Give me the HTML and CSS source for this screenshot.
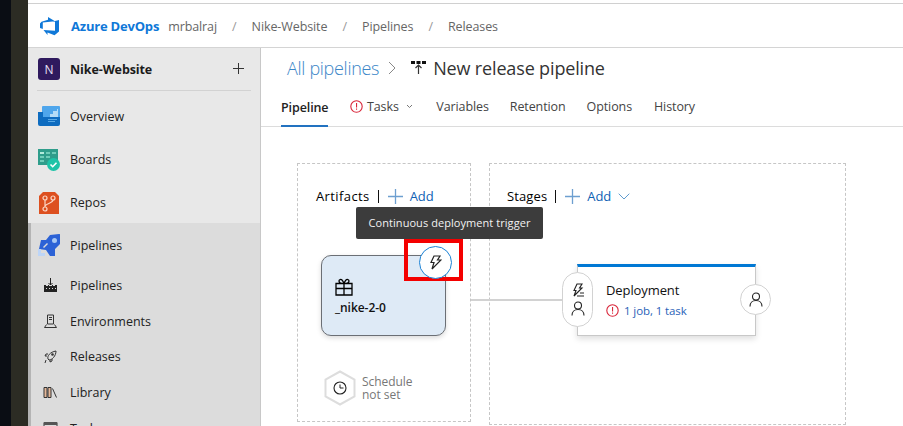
FILE: index.html
```html
<!DOCTYPE html>
<html lang="en">
<head>
<meta charset="utf-8">
<title>New release pipeline</title>
<link rel="stylesheet" href="styles.css">
</head>
<body>
<div class="strip-dark"></div>
<div class="strip-olive"></div>
<div class="app">
  <header class="topbar">
    <svg class="logo" width="20" height="20" viewBox="0 0 20 20"><path fill="#0f78d8" d="M19 4v11.400l-4.500 3.800-7-2.600v2.500l-4-5.200 11.500.9V5L19 4zM15 5.300L8 1v2.800L1.500 5.700 0 7.600v4.300l2.800 1.200V6.400L15 5.300z"/></svg>
    <b class="brand">Azure DevOps</b>
    <span class="crumb crumb-org">mrbalraj</span><span class="slash">/</span>
    <span class="crumb">Nike-Website</span><span class="slash">/</span>
    <span class="crumb">Pipelines</span><span class="slash">/</span>
    <span class="crumb">Releases</span>
  </header>
  <div class="body">
    <nav class="sidebar">
      <div class="project">
        <span class="avatar">N</span><b class="project-name">Nike-Website</b>
        <svg class="plus" width="11" height="11" viewBox="0 0 11 11"><path fill="none" stroke="#333" d="M5.500 0v11M0 5.500h11"/></svg>
      </div>
      <div class="nav-top">
        <a class="nav-item">
          <svg class="nav-icon" width="22" height="21" viewBox="0 0 22 21"><path fill="#4fa6ec" d="M4 1a1 1 0 0 1 1-1h16a1 1 0 0 1 1 1v17H4z"/><path fill="#b5dcf7" d="M8 11h4V8h3V5h4V3h1v9H8z"/><path fill="#0e6cc0" d="M0 6h5v5h17v7a2 2 0 0 1-2 2H2a2 2 0 0 1-2-2z"/><path fill="#5aaae6" d="M10 13h9v1h-9zM10 15h7v1h-7z"/></svg>
          <span>Overview</span></a>
        <a class="nav-item">
          <svg class="nav-icon" width="22" height="22" viewBox="0 0 22 22"><path fill="#2f9d8b" d="M0 0h20v16H0z"/><path fill="#b4ebdc" d="M2 3h4v2H2z"/><path fill="#6fcdb9" d="M8 3h4v2H8zM14 3h4v2h-4zM8 7h4v2H8zM2 7h4v2H2zM2 11h4v2H2z"/><circle cx="15.500" cy="15.500" r="6.500" fill="#1ec3a7"/><path fill="none" stroke="#fff" stroke-width="1.600" d="M12.500 15.500l2.200 2.200 3.800-4"/></svg>
          <span>Boards</span></a>
        <a class="nav-item">
          <svg class="nav-icon" width="22" height="23" viewBox="0 0 22 23"><path fill="#dd5020" d="M5 1h12l4 4v18H1V5z"/><g fill="none" stroke="#fbd6c6" stroke-width="1.200"><circle cx="7" cy="7" r="2"/><circle cx="15" cy="7" r="2"/><circle cx="7" cy="18" r="2"/><path d="M7 9v7M15 9c0 3-6 3-8 6"/></g></svg>
          <span>Repos</span></a>
      </div>
      <div class="nav-section">
        <a class="nav-item nav-head">
          <svg class="nav-icon" width="22" height="22" viewBox="0 0 22 22"><path fill="#2c62d6" d="M8 6l4-5 9-1c1 0 1 0 1 1v9l-5 5v7h-5l-4-6-7-1 2-9z"/><circle cx="16.500" cy="6.500" r="2.500" fill="#a8c8f4"/><path fill="#bdd5f7" d="M0 15h3v4h4v3H0z"/><path fill="#dcdcdc" d="M5 13l4-4 1 1-4 4z"/></svg>
          <span>Pipelines</span></a>
        <a class="nav-sub">
          <svg class="sub-icon" width="15" height="15" viewBox="0 0 15 15"><path fill="none" stroke="#222" d="M7.500 0v7M5.500 5l2 2 2-2"/><path fill="#222" d="M1 7h2v1h2V7h1v1h3V7h1v1h2V7h2v7H1z"/><path fill="#ddd" d="M3 10h1v1H3zM6 10h1v1H6zM9 10h1v1H9zM12 10h1v1h-1z"/></svg>
          <span>Pipelines</span></a>
        <a class="nav-sub">
          <svg class="sub-icon" width="15" height="15" viewBox="0 0 15 15"><path fill="none" stroke="#333" d="M4.500 1h6v9h-6zM6 3.500h3M6 5.500h3M3.500 10.500l-2 3h12l-2-3"/></svg>
          <span>Environments</span></a>
        <a class="nav-sub">
          <svg class="sub-icon" width="15" height="15" viewBox="0 0 15 15"><path fill="none" stroke="#333" d="M5 10c-1-3 2-7 8-8 0 5-4 9-7 9zM5 5H3L2 7h2M9 10v2l-2 1v-2M3 11l-1 3"/><circle cx="9.500" cy="5.500" r="1.300" fill="#333"/></svg>
          <span>Releases</span></a>
        <a class="nav-sub">
          <svg class="sub-icon" width="15" height="15" viewBox="0 0 15 15"><path fill="#e5b89a" stroke="#333" d="M1 2.500h3v10H1zM5 2.500h3v10H5z"/><path fill="none" stroke="#333" d="M9.500 3.500l4 9"/></svg>
          <span>Library</span></a>
        <a class="nav-sub">
          <svg class="sub-icon" width="15" height="15" viewBox="0 0 15 15"><path fill="none" stroke="#333" d="M1 1.500h13v11H1z"/><path fill="#555" d="M1 1h13v3H1z"/></svg>
          <span>Task groups</span></a>
      </div>
    </nav>
    <main class="main">
      <div class="titlebar">
        <a class="all-link">All pipelines</a>
        <svg class="chev" width="9" height="14" viewBox="0 0 9 14"><path fill="none" stroke="#888" d="M1 1l6 6-6 6"/></svg>
        <svg class="title-icon" width="15" height="15" viewBox="0 0 15 15"><path fill="#111" d="M0 1h4v3H0zM5.500 1h4v3h-4zM11 1h4v3h-4z"/><path fill="none" stroke="#333" stroke-width="1.200" d="M7.500 14V5M4.500 8l3-3 3 3"/></svg>
        <span class="title">New release pipeline</span>
      </div>
      <div class="tabs">
        <a class="tab tab-active">Pipeline</a>
        <a class="tab tab-tasks">
          <svg class="warn" width="13" height="13" viewBox="0 0 13 13"><circle cx="6.500" cy="6.500" r="5.700" fill="none" stroke="#d9263a" stroke-width="1.100"/><path fill="#d9263a" d="M6 3h1.100v4.500H6zM6 8.600h1.100v1.200H6z"/></svg>
          Tasks
          <svg class="caret" width="7" height="5" viewBox="0 0 7 5"><path fill="none" stroke="#777" d="M1 1l2.500 2.500L6 1"/></svg>
        </a>
        <a class="tab">Variables</a>
        <a class="tab">Retention</a>
        <a class="tab tab-options">Options</a>
        <a class="tab">History</a>
      </div>
      <div class="canvas">
        <section class="zone zone-artifacts">
          <div class="zone-head"><span class="zone-label">Artifacts</span><i class="bar"></i>
            <svg class="add-plus" width="15" height="15" viewBox="0 0 15 15"><path fill="none" stroke="#6d9fd0" stroke-width="1.300" d="M7.500 0v15M0 7.500h15"/></svg>
            <a class="add">Add</a></div>
        </section>
        <section class="zone zone-stages">
          <div class="zone-head"><span class="zone-label">Stages</span><i class="bar"></i>
            <svg class="add-plus" width="15" height="15" viewBox="0 0 15 15"><path fill="none" stroke="#6d9fd0" stroke-width="1.300" d="M7.500 0v15M0 7.500h15"/></svg>
            <a class="add">Add</a>
            <svg class="add-caret" width="12" height="7" viewBox="0 0 12 7"><path fill="none" stroke="#5f9bcf" d="M.7.700L6 6 11.300.700"/></svg></div>
        </section>
        <div class="connector"></div>
        <div class="artifact">
          <svg class="gift" width="18" height="18" viewBox="0 0 18 18"><path fill="none" stroke="#000" stroke-width="1.300" d="M1 5.500h16v11.500H1zM1 10.500h16M9 5.500V17M9 5.500C6 5.500 4 4.500 4 3s2-2 3-1 2 3.500 2 3.500 1-2.500 2-3.500 3-.5 3 1-2 2.500-5 2.500"/></svg>
          <div class="artifact-name">_nike-2-0</div>
        </div>
        <div class="highlight"></div>
        <div class="trigger">
          <svg width="13" height="15" viewBox="0 0 13 15"><path fill="none" stroke="#222" stroke-width="1.200" d="M5 1h6L8.500 5H12L3 14l2-6.500H2z"/></svg>
        </div>
        <div class="tooltip">Continuous deployment trigger</div>
        <div class="schedule">
          <svg class="hex" width="34" height="36" viewBox="0 0 34 36"><path fill="#fff" stroke="#ddd" stroke-width="2" d="M17 1.500l14.500 8v17l-14.500 8-14.500-8v-17z"/><circle cx="17" cy="18" r="6" fill="none" stroke="#222" stroke-width="1.100"/><path fill="none" stroke="#222" d="M17 14.500V18h3.500"/></svg>
          <span class="schedule-text">Schedule<br>not set</span>
        </div>
        <div class="stage">
          <div class="stage-name">Deployment</div>
          <div class="stage-meta">
            <svg width="13" height="13" viewBox="0 0 13 13"><circle cx="6.500" cy="6.500" r="5.700" fill="none" stroke="#d9263a" stroke-width="1.100"/><path fill="#d9263a" d="M6 3h1.100v4.500H6zM6 8.600h1.100v1.200H6z"/></svg>
            <a>1 job, 1 task</a>
          </div>
        </div>
        <div class="pill">
          <svg width="14" height="15" viewBox="0 0 14 15"><path fill="none" stroke="#222" stroke-width="1.100" d="M6 1h5L8.500 5H11l-8 8 2-5.500H3zM6 13h7M9 10h4"/></svg>
          <svg width="14" height="15" viewBox="0 0 14 15"><circle cx="7" cy="4.500" r="3.500" fill="none" stroke="#222" stroke-width="1.100"/><path fill="none" stroke="#222" stroke-width="1.100" d="M1 14.500c0-3.500 2.500-6 6-6s6 2.500 6 6"/></svg>
        </div>
        <div class="post">
          <svg width="14" height="15" viewBox="0 0 14 15"><circle cx="7" cy="4.500" r="3.500" fill="none" stroke="#222" stroke-width="1.100"/><path fill="none" stroke="#222" stroke-width="1.100" d="M1 14.500c0-3.500 2.500-6 6-6s6 2.500 6 6"/></svg>
        </div>
      </div>
    </main>
  </div>
</div>
</body>
</html>
```
FILE: styles.css
```css
* { box-sizing: border-box; }
html, body { height: 100%; }
body {
  margin: 0;
  display: flex;
  height: 426px;
  overflow: hidden;
  background: #fff;
  font-family: "Open Sans", "Noto Sans", sans-serif;
  color: #222;
}
a { color: inherit; text-decoration: none; }
.strip-dark { width: 11px; background: #0a0d14; }
.strip-olive { width: 17px; background: #2c2c24; }
.app { flex: 1; display: flex; flex-direction: column; min-width: 0; }

.topbar {
  height: 48px;
  flex: none;
  display: flex;
  align-items: center;
  padding: 5px 0 0 12px;
  box-shadow: inset 0 3px 0 #fff, inset 0 4px 0 #d0d0d0;
  border-bottom: 1px solid #d4d4d4;
  font-size: 12.500px;
  color: #666;
}
.logo { margin-right: 11px; }
.brand { color: #0f78d8; font-size: 13px; font-weight: 700; margin-right: 9px; letter-spacing: -.2px; }
.crumb { letter-spacing: -.1px; }
.slash { margin: 0 15px; color: #999; }

.body { flex: 1; display: flex; min-height: 0; }
.sidebar {
  width: 233px;
  flex: none;
  display: flex;
  flex-direction: column;
  background: #e8e8e8;
  border-right: 1px solid #c8c8c8;
  font-size: 12.500px;
  color: #222;
}
.project {
  margin: 0 9px;
  height: 43px;
  flex: none;
  display: flex;
  align-items: center;
  border-bottom: 1px solid #d2d2d2;
}
.avatar {
  width: 22px; height: 22px;
  margin-left: 1px;
  background: #2f1a5e;
  color: #e8e0f4;
  border-radius: 3px;
  font-size: 12px;
  display: flex; align-items: center; justify-content: center;
}
.project-name { margin-left: 10px; flex: 1; font-size: 12.500px; font-weight: 700; color: #1b1b1b; letter-spacing: -.1px; }
.plus { margin-right: 7px; margin-bottom: 2px; }
.nav-top { display: flex; flex-direction: column; flex: none; height: 132px; padding-top: 4px; }
.nav-item { height: 43px; flex: none; display: flex; align-items: center; padding-left: 9px; }
.nav-icon { margin: 0 10px 0 1px; flex: none; }
.nav-section {
  flex: 1;
  min-height: 0;
  overflow: hidden;
  background: #dcdcdc;
  border-left: 3px solid #b4b4b4;
}
.nav-head { padding-left: 6px; height: 44.500px; font-weight: 500; }
.nav-sub { display: flex; align-items: center; height: 35.700px; padding-left: 12px; }
.sub-icon { margin-right: 12px; flex: none; }

.main { flex: 1; display: flex; flex-direction: column; min-width: 0; }
.titlebar { height: 39px; flex: none; display: flex; align-items: center; padding-left: 26px; }
.all-link { color: #3b86c8; font-size: 18px; font-weight: 300; letter-spacing: -.3px; }
.chev { margin: 0 14px 0 9px; }
.title-icon { margin-right: 7px; }
.title { font-size: 18px; color: #333; letter-spacing: -.15px; }
.tabs {
  height: 40px;
  flex: none;
  display: flex;
  align-items: stretch;
  padding-left: 20px;
  border-bottom: 1px solid #dcdcdc;
  font-size: 12.500px;
  color: #444;
}
.tab { display: flex; align-items: center; margin-right: 21px; letter-spacing: -.1px; }
.tab-active { color: #222; font-weight: 600; box-shadow: inset 0 -2px 0 #2272c0; margin-bottom: -1px; margin-right: 22px; }
.tab-tasks { gap: 3.500px; margin-right: 23px; }
.tab-options { margin-right: 22px; }
.caret { margin-left: 4px; }

.canvas { flex: 1; position: relative; overflow: hidden; }
.zone { position: absolute; top: 36px; border: 1px dashed #c6c6c6; padding-top: 23px; }
.zone-artifacts { left: 36px; width: 174px; height: 259px; padding-left: 18px; }
.zone-stages { left: 228px; width: 357px; height: 262px; padding-left: 17px; }
.zone-head { display: flex; align-items: center; height: 18px; font-size: 13px; color: #000; letter-spacing: -.05px; }
.zone-artifacts .zone-label { letter-spacing: .4px; }
.zone-stages .zone-label { letter-spacing: .12px; }
.bar { width: 1px; height: 13px; background: #111; margin: 0 9px 0 8px; }
.add-plus { margin-right: 7px; }
.add { color: #0f62b4; font-weight: 500; }
.add-caret { margin-left: 7px; }
.connector { position: absolute; left: 210px; top: 172px; width: 92px; height: 2px; background: #d2d2d2; }
.artifact {
  position: absolute; left: 60px; top: 128px;
  width: 125px; height: 81px;
  background: #deeaf6;
  border: 1px solid #6b6f75;
  border-radius: 10px;
  box-shadow: 0 2px 5px rgba(0,0,0,.15);
  padding: 22px 0 0 13px;
}
.gift { display: block; }
.artifact-name { margin-top: 3px; font-size: 12px; font-weight: 600; color: #111; letter-spacing: -.05px; }
.highlight { position: absolute; left: 143px; top: 112px; width: 59px; height: 42px; border: 4px solid #f40000; }
.trigger {
  position: absolute; left: 158px; top: 119px;
  width: 33px; height: 33px;
  background: #fff;
  border: 1px solid #1b82d6;
  border-radius: 50%;
  display: flex; align-items: center; justify-content: center;
}
.tooltip {
  position: absolute; left: 95px; top: 80px;
  width: 187px; height: 32px;
  background: #3c3c3c;
  border-radius: 2px;
  color: #f2f2f2;
  font-size: 11px;
  letter-spacing: .06px;
  line-height: 32px;
  text-align: center;
}
.schedule { position: absolute; left: 62px; top: 243px; display: flex; align-items: center; gap: 5px; }
.schedule-text { font-size: 12px; line-height: 13px; color: #777; letter-spacing: -.05px; }
.stage {
  position: absolute; left: 316px; top: 137px;
  width: 179px; height: 72px;
  background: #fff;
  border: 1px solid #c8c8c8;
  border-top: 3px solid #0078d4;
  box-shadow: 0 3px 6px rgba(0,0,0,.13);
  padding: 14px 0 0 28px;
}
.stage-name { font-size: 13px; color: #111; letter-spacing: -.1px; }
.stage-meta { display: flex; align-items: center; gap: 5px; margin-top: 4px; font-size: 11.500px; color: #2a62b8; letter-spacing: -.1px; }
.pill {
  position: absolute; left: 301px; top: 145px;
  width: 31px; height: 55px;
  background: #fff;
  border: 1px solid #d2d2d2;
  border-radius: 16px;
  display: flex; flex-direction: column; align-items: center; justify-content: center; gap: 3px;
}
.post {
  position: absolute; left: 479px; top: 157px;
  width: 31px; height: 31px;
  background: #fff;
  border: 1px solid #d2d2d2;
  border-radius: 50%;
  display: flex; align-items: center; justify-content: center;
}
```
